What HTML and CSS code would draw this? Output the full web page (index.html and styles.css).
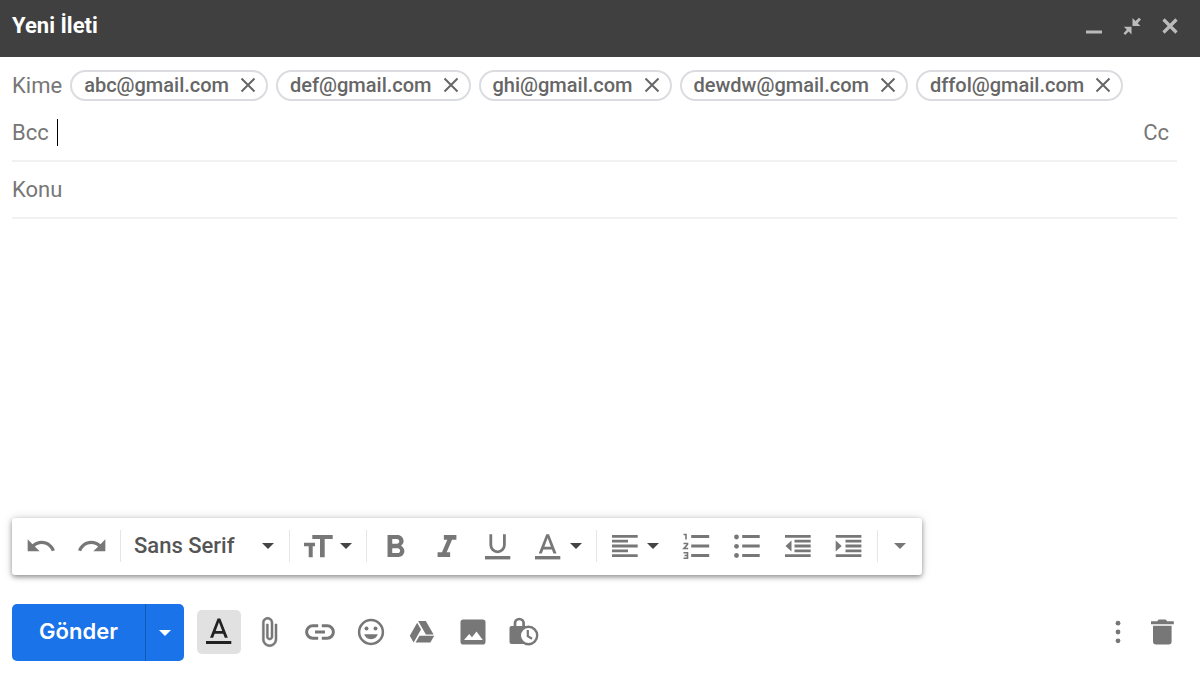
FILE: index.html
```html
<!DOCTYPE html>
<html lang="tr">
<head>
  <meta charset="UTF-8">
  <meta name="viewport" content="width=device-width, initial-scale=1.0">
  <title>Yeni İleti</title>
  <link rel="stylesheet" href="styles.css">
</head>
<body>
  <svg class="sprite" aria-hidden="true">
    <symbol id="caret" viewBox="0 0 16 16"><path d="M2 5h12l-6 6z"/></symbol>
    <symbol id="remove" viewBox="0 0 16 16"><path d="M1.5 1.5l13 13M14.5 1.5l-13 13" fill="none" stroke="currentColor" stroke-width="2"/></symbol>
  </svg>
  <form class="compose" onsubmit="return false">
    <header class="titlebar">
      <h1>Yeni İleti</h1>
      <button type="button" aria-label="Küçült"><svg viewBox="0 0 18 18"><path d="M1 13.500h16v3H1z"/></svg></button>
      <button type="button" aria-label="Tam ekrandan çık"><svg viewBox="0 0 18 18"><path d="M9.500 1v8h8L14.700 6.200 18 2.500 16 .7l-3.500 3.300zM.8 9.800h7.700v7.700L5.600 14.600 2.200 18 .5 16.200l3.300-3.400z"/></svg></button>
      <button type="button" aria-label="Kapat"><svg viewBox="0 0 18 18"><path d="M2.500 2.500l13 13M15.500 2.500l-13 13" fill="none" stroke="currentColor" stroke-width="3.200"/></svg></button>
    </header>

    <section class="fields">
      <div class="recipients">
        <label for="to">Kime</label>
        <span class="chip">abc@gmail.com<button type="button" aria-label="Kaldır"><svg><use href="#remove"/></svg></button></span>
        <span class="chip">def@gmail.com<button type="button" aria-label="Kaldır"><svg><use href="#remove"/></svg></button></span>
        <span class="chip">ghi@gmail.com<button type="button" aria-label="Kaldır"><svg><use href="#remove"/></svg></button></span>
        <span class="chip">dewdw@gmail.com<button type="button" aria-label="Kaldır"><svg><use href="#remove"/></svg></button></span>
        <span class="chip">dffol@gmail.com<button type="button" aria-label="Kaldır"><svg><use href="#remove"/></svg></button></span>
        <input id="to" type="text">
      </div>
      <div class="field">
        <label for="bcc">Bcc</label>
        <span class="cursor"></span>
        <input id="bcc" type="text">
        <button type="button" class="cc">Cc</button>
      </div>
      <div class="field">
        <input id="subject" type="text" placeholder="Konu" aria-label="Konu">
      </div>
    </section>

    <textarea class="message" aria-label="İleti metni"></textarea>

    <div class="format">
      <div class="group">
        <button type="button" aria-label="Geri al"><svg viewBox="0 0 24 24"><path d="M12.500 8c-2.650 0-5.050.99-6.900 2.600L2 7v9h9l-3.620-3.620c1.390-1.160 3.160-1.880 5.120-1.880 3.540 0 6.550 2.310 7.600 5.500l2.370-.78C21.080 11.030 17.150 8 12.500 8z"/></svg></button>
        <button type="button" aria-label="Yinele"><svg viewBox="0 0 24 24"><path d="M18.400 10.600C16.550 8.990 14.150 8 11.500 8c-4.650 0-8.580 3.030-9.960 7.220L3.900 16c1.050-3.190 4.050-5.500 7.600-5.500 1.950 0 3.730.72 5.120 1.880L13 16h9V7l-3.600 3.600z"/></svg></button>
      </div>
      <div class="font">
        <select aria-label="Yazı tipi">
          <option>Sans Serif</option>
          <option>Serif</option>
        </select>
        <svg class="arrow"><use href="#caret"/></svg>
      </div>
      <div class="group">
        <button type="button" class="menu" aria-label="Boyut"><svg viewBox="0 0 32 32"><path d="M10.300 5h20.400v4h-8v18.300H18V9h-7.700zM2 12.700h11v3.600h-2.300v11h-4v-11H2z"/></svg><svg class="arrow"><use href="#caret"/></svg></button>
      </div>
      <div class="group">
        <button type="button" aria-label="Kalın"><svg viewBox="2.200 .8 20.400 20.400"><path d="M15.600 10.790c.97-.67 1.650-1.770 1.650-2.790 0-2.260-1.750-4-4-4H7v14h7.040c2.090 0 3.710-1.700 3.710-3.790 0-1.520-.86-2.820-2.150-3.420zM10 6.500h3c.83 0 1.500.67 1.500 1.500s-.67 1.500-1.500 1.500h-3v-3zm3.500 9H10v-3h3.500c.83 0 1.500.67 1.500 1.500s-.67 1.500-1.500 1.500z"/></svg></button>
        <button type="button" aria-label="İtalik"><svg viewBox="1.800 .8 20.400 20.400"><path d="M10 4v3h2.210l-3.420 8H6v3h8v-3h-2.210l3.420-8H18V4z"/></svg></button>
        <button type="button" aria-label="Altı çizili"><svg viewBox="0 0 32 32"><path d="M8.800 4.300v10.700a6.800 6.800 0 0 0 13.600 0V4.300" fill="none" stroke="currentColor" stroke-width="2.800"/><path d="M3 26h25.300v3.400H3z"/></svg></button>
        <button type="button" class="menu" aria-label="Metin rengi"><svg viewBox="0 0 32 32"><path transform="translate(-.8 .2) scale(1.370)" d="M11 3L5.500 17h2.250l1.120-3h6.250l1.120 3h2.250L13 3h-2zm-1.380 9L12 5.670 14.380 12H9.620z"/><path d="M3 26h25.300v3.400H3z"/></svg><svg class="arrow"><use href="#caret"/></svg></button>
      </div>
      <div class="group">
        <button type="button" class="menu" aria-label="Hizala"><svg viewBox="0 0 32 32"><path class="line" d="M3 6.300h25.700M3 11.200h16M3 16h25.700M3 20.800h16M3 25.700h25.700"/></svg><svg class="arrow"><use href="#caret"/></svg></button>
        <button type="button" aria-label="Numaralı liste"><svg viewBox="0 0 32 32"><path class="line" d="M11.200 6.500h18M11.200 16h18M11.200 25.500h18"/><path class="thin" d="M3.500 4.500H6v5M3.500 13.500h4v1l-3.600 4h4.300M3.500 22.800H7.500v5.400H3.500M4.500 25.500h3"/></svg></button>
        <button type="button" aria-label="Madde işaretli liste"><svg viewBox="0 0 32 32"><path class="line" d="M11.200 6.500h17.500M11.200 16h17.500M11.200 25.500h17.500"/><circle cx="5.500" cy="7" r="2.400"/><circle cx="5.500" cy="16.300" r="2.400"/><circle cx="5.500" cy="25.500" r="2.400"/></svg></button>
        <button type="button" aria-label="Girintiyi azalt"><svg viewBox="0 0 32 32"><path class="line" d="M3 6.300h25.700M12.500 11.200h16.200M12.500 16h16.200M12.500 20.800h16.200M3 25.700h25.700"/><path d="M3.500 16l6-5.500v11z"/></svg></button>
        <button type="button" aria-label="Girintiyi artır"><svg viewBox="0 0 32 32"><path class="line" d="M2.700 6.300h25.700M12.500 11.200h15.900M12.500 16h15.900M12.500 20.800h15.900M2.700 25.700h25.700"/><path d="M8.700 16l-6-5.500v11z"/></svg></button>
      </div>
      <button type="button" class="more" aria-label="Diğer biçimlendirme seçenekleri"><svg class="arrow"><use href="#caret"/></svg></button>
    </div>

    <footer class="actions">
      <div class="send">
        <button type="submit">Gönder</button>
        <button type="button" class="send-more" aria-label="Diğer gönderme seçenekleri"><svg class="arrow"><use href="#caret"/></svg></button>
      </div>
      <button type="button" class="square active" aria-label="Biçimlendirme seçenekleri"><svg viewBox="0 1 32 32"><path transform="translate(-.5 -.5) scale(1.370)" d="M11 3L5.500 17h2.250l1.120-3h6.250l1.120 3h2.250L13 3h-2zm-1.380 9L12 5.670 14.380 12H9.620z"/><path d="M3 26h25.300v3H3z"/></svg></button>
      <div class="tools">
        <button type="button" aria-label="Dosya ekle"><svg viewBox="0 0 24 24"><path stroke="currentColor" stroke-width=".4" d="M16.500 6v11.500c0 2.210-1.790 4-4 4s-4-1.790-4-4V5c0-1.380 1.120-2.500 2.500-2.500s2.500 1.120 2.500 2.500v10.500c0 .55-.45 1-1 1s-1-.45-1-1V6H10v9.500c0 1.380 1.120 2.500 2.500 2.500s2.500-1.120 2.500-2.500V5c0-2.210-1.790-4-4-4S7 2.790 7 5v12.500c0 3.040 2.460 5.500 5.500 5.500s5.500-2.460 5.500-5.500V6h-1.500z"/></svg></button>
        <button type="button" aria-label="Bağlantı ekle"><svg viewBox="0 0 32 32"><path d="M14.200 9.800H8.800a6.200 6.200 0 0 0 0 12.400h5.400M17.800 9.800h5.400a6.200 6.200 0 0 1 0 12.400h-5.400M11 16h10" fill="none" stroke="currentColor" stroke-width="3"/></svg></button>
        <button type="button" aria-label="Emoji ekle"><svg viewBox="0 0 32 32"><circle cx="16" cy="16" r="11.900" fill="none" stroke="currentColor" stroke-width="2.500"/><circle cx="11.500" cy="12.500" r="2"/><circle cx="20.500" cy="12.500" r="2"/><path d="M9.200 18.300h13.600a7.200 7.200 0 0 1-13.600 0z"/></svg></button>
        <button type="button" aria-label="Drive'dan ekle"><svg viewBox="-2.200 -2.500 28.400 28.400"><path d="M7.710 3.500L1.150 15l3.430 6 6.550-11.500M9.730 15L6.300 21h13.120l3.430-6M22.280 14L15.420 2H8.580l6.860 12h6.840z"/></svg></button>
        <button type="button" aria-label="Fotoğraf ekle"><svg viewBox="0 0 32 32"><path fill-rule="evenodd" d="M6.300 3.500h19.400a2.800 2.800 0 0 1 2.800 2.800v19.400a2.800 2.800 0 0 1-2.800 2.800H6.300a2.800 2.800 0 0 1-2.800-2.800V6.300a2.800 2.800 0 0 1 2.800-2.800zM7 24h18.800l-6.300-8.500-4.500 5.700-2.800-3.200z"/></svg></button>
        <button type="button" aria-label="Gizli mod"><svg viewBox="0 0 32 32"><path d="M7 11V7.300a4.300 4.300 0 0 1 8.600 0V11" fill="none" stroke="currentColor" stroke-width="2.700"/><rect x="1.500" y="10" width="18" height="18" rx="2"/><circle cx="20.500" cy="19.500" r="8.700" fill="#fff" stroke="currentColor" stroke-width="2.400"/><path d="M19.800 14v6.200l4.200 2.600" fill="none" stroke="currentColor" stroke-width="2.200"/></svg></button>
      </div>
      <button type="button" class="square" aria-label="Diğer seçenekler"><svg viewBox="0 0 32 32"><circle cx="16" cy="7.200" r="2.400"/><circle cx="16" cy="16" r="2.400"/><circle cx="16" cy="24.800" r="2.400"/></svg></button>
      <button type="button" class="square" aria-label="Taslağı sil"><svg viewBox="0 0 32 32"><path d="M5 5.200h6.200l1.500-1.700h7l1.500 1.700h6.600v3H5zM7 9.800h18.600v15.700a3 3 0 0 1-3 3H10a3 3 0 0 1-3-3z"/></svg></button>
    </footer>
  </form>
</body>
</html>
```
FILE: styles.css
```css
* {
  box-sizing: border-box;
}
body {
  margin: 0;
  background: #fff;
  color: #777;
  font-family: Roboto, sans-serif;
  font-size: 22px;
}
button, input, select, textarea {
  margin: 0;
  padding: 0;
  border: 0;
  outline: 0;
  background: none;
  color: inherit;
  font: inherit;
}
button {
  display: flex;
  align-items: center;
  justify-content: center;
  cursor: pointer;
}
svg {
  flex: none;
  width: 32px;
  height: 32px;
  fill: currentColor;
}
.sprite {
  display: none;
}
.arrow {
  width: 16px;
  height: 16px;
  color: #444;
}
.line {
  fill: none;
  stroke: currentColor;
  stroke-width: 2.8;
}
.thin {
  fill: none;
  stroke: currentColor;
  stroke-width: 1.6;
}
.compose {
  display: flex;
  flex-direction: column;
  min-height: 100vh;
  padding-bottom: 17px;
}

/* title bar */
.titlebar {
  display: flex;
  align-items: center;
  gap: 20px;
  height: 57px;
  padding: 0 21px 6px 12px;
  background: #404040;
  color: #bbb;
}
.titlebar h1 {
  flex: 1;
  margin: 0;
  color: #fff;
  font-size: 22px;
  font-weight: 700;
}
.titlebar svg {
  width: 18px;
  height: 18px;
}

/* recipients and subject */
.fields {
  padding: 13px 23px 0 12px;
}
.recipients {
  display: flex;
  align-items: center;
  gap: 8px;
  padding-bottom: 4px;
}
.recipients input {
  flex: 1;
  min-width: 0;
}
.chip {
  display: flex;
  align-items: center;
  gap: 11px;
  height: 31px;
  padding: 0 10px 2px 12px;
  border: 2px solid #dadce0;
  border-radius: 16px;
  color: #666;
  font-size: 20px;
  font-weight: 500;
}
.chip svg {
  width: 16px;
  height: 16px;
}
.field {
  display: flex;
  align-items: center;
  height: 57px;
  border-bottom: 2px solid #f1f1f1;
}
.field input {
  flex: 1;
  min-width: 0;
}
.field input::placeholder {
  color: inherit;
  opacity: 1;
}
.cursor {
  width: 1px;
  height: 27px;
  margin-left: 8px;
  background: #000;
}
.cc {
  padding: 0 8px;
}
.message {
  flex: 1;
  margin: 0 23px 0 12px;
  resize: none;
}

/* formatting toolbar */
.format {
  display: flex;
  align-items: center;
  align-self: flex-start;
  height: 57px;
  margin: 0 12px 29px;
  padding-bottom: 2px;
  border-radius: 3px;
  background: #fff;
  box-shadow: 0 2px 5px rgba(0, 0, 0, 0.4), 0 0 12px rgba(0, 0, 0, 0.12);
}
.group, .font {
  display: flex;
  align-items: center;
  height: 32px;
  padding: 0 3px;
  border-right: 1px solid #e6e6e6;
}
.group button {
  width: 51px;
}
.group .menu {
  gap: 4px;
  width: 70px;
}
.font {
  position: relative;
  padding: 0;
}
.font select {
  width: 168px;
  padding-left: 13px;
  appearance: none;
  color: #555;
  font-weight: 500;
}
.font .arrow {
  position: absolute;
  right: 13px;
  pointer-events: none;
}
.more {
  width: 44px;
}
.more .arrow {
  color: #777;
}

/* bottom bar */
.actions {
  display: flex;
  align-items: center;
  padding: 0 16px 0 12px;
}
.send {
  display: flex;
  height: 57px;
  margin-right: 13px;
  border-radius: 5px;
  background: #1a73e8;
  color: #fff;
}
.send button {
  width: 133px;
  padding-bottom: 3px;
  font-family: Inter, sans-serif;
  font-size: 22px;
  font-weight: 600;
}
.send .send-more {
  width: 39px;
  padding-bottom: 0;
  border-left: 1px solid #1258b5;
}
.send .arrow {
  color: #fff;
}
.square {
  width: 44px;
  height: 44px;
  margin-bottom: 2px;
  border-radius: 5px;
}
.active {
  background: #e1e1e1;
  color: #222;
}
.tools {
  display: flex;
  flex: 1;
  padding: 0 0 2px 2px;
}
.tools button {
  width: 51px;
}
```
